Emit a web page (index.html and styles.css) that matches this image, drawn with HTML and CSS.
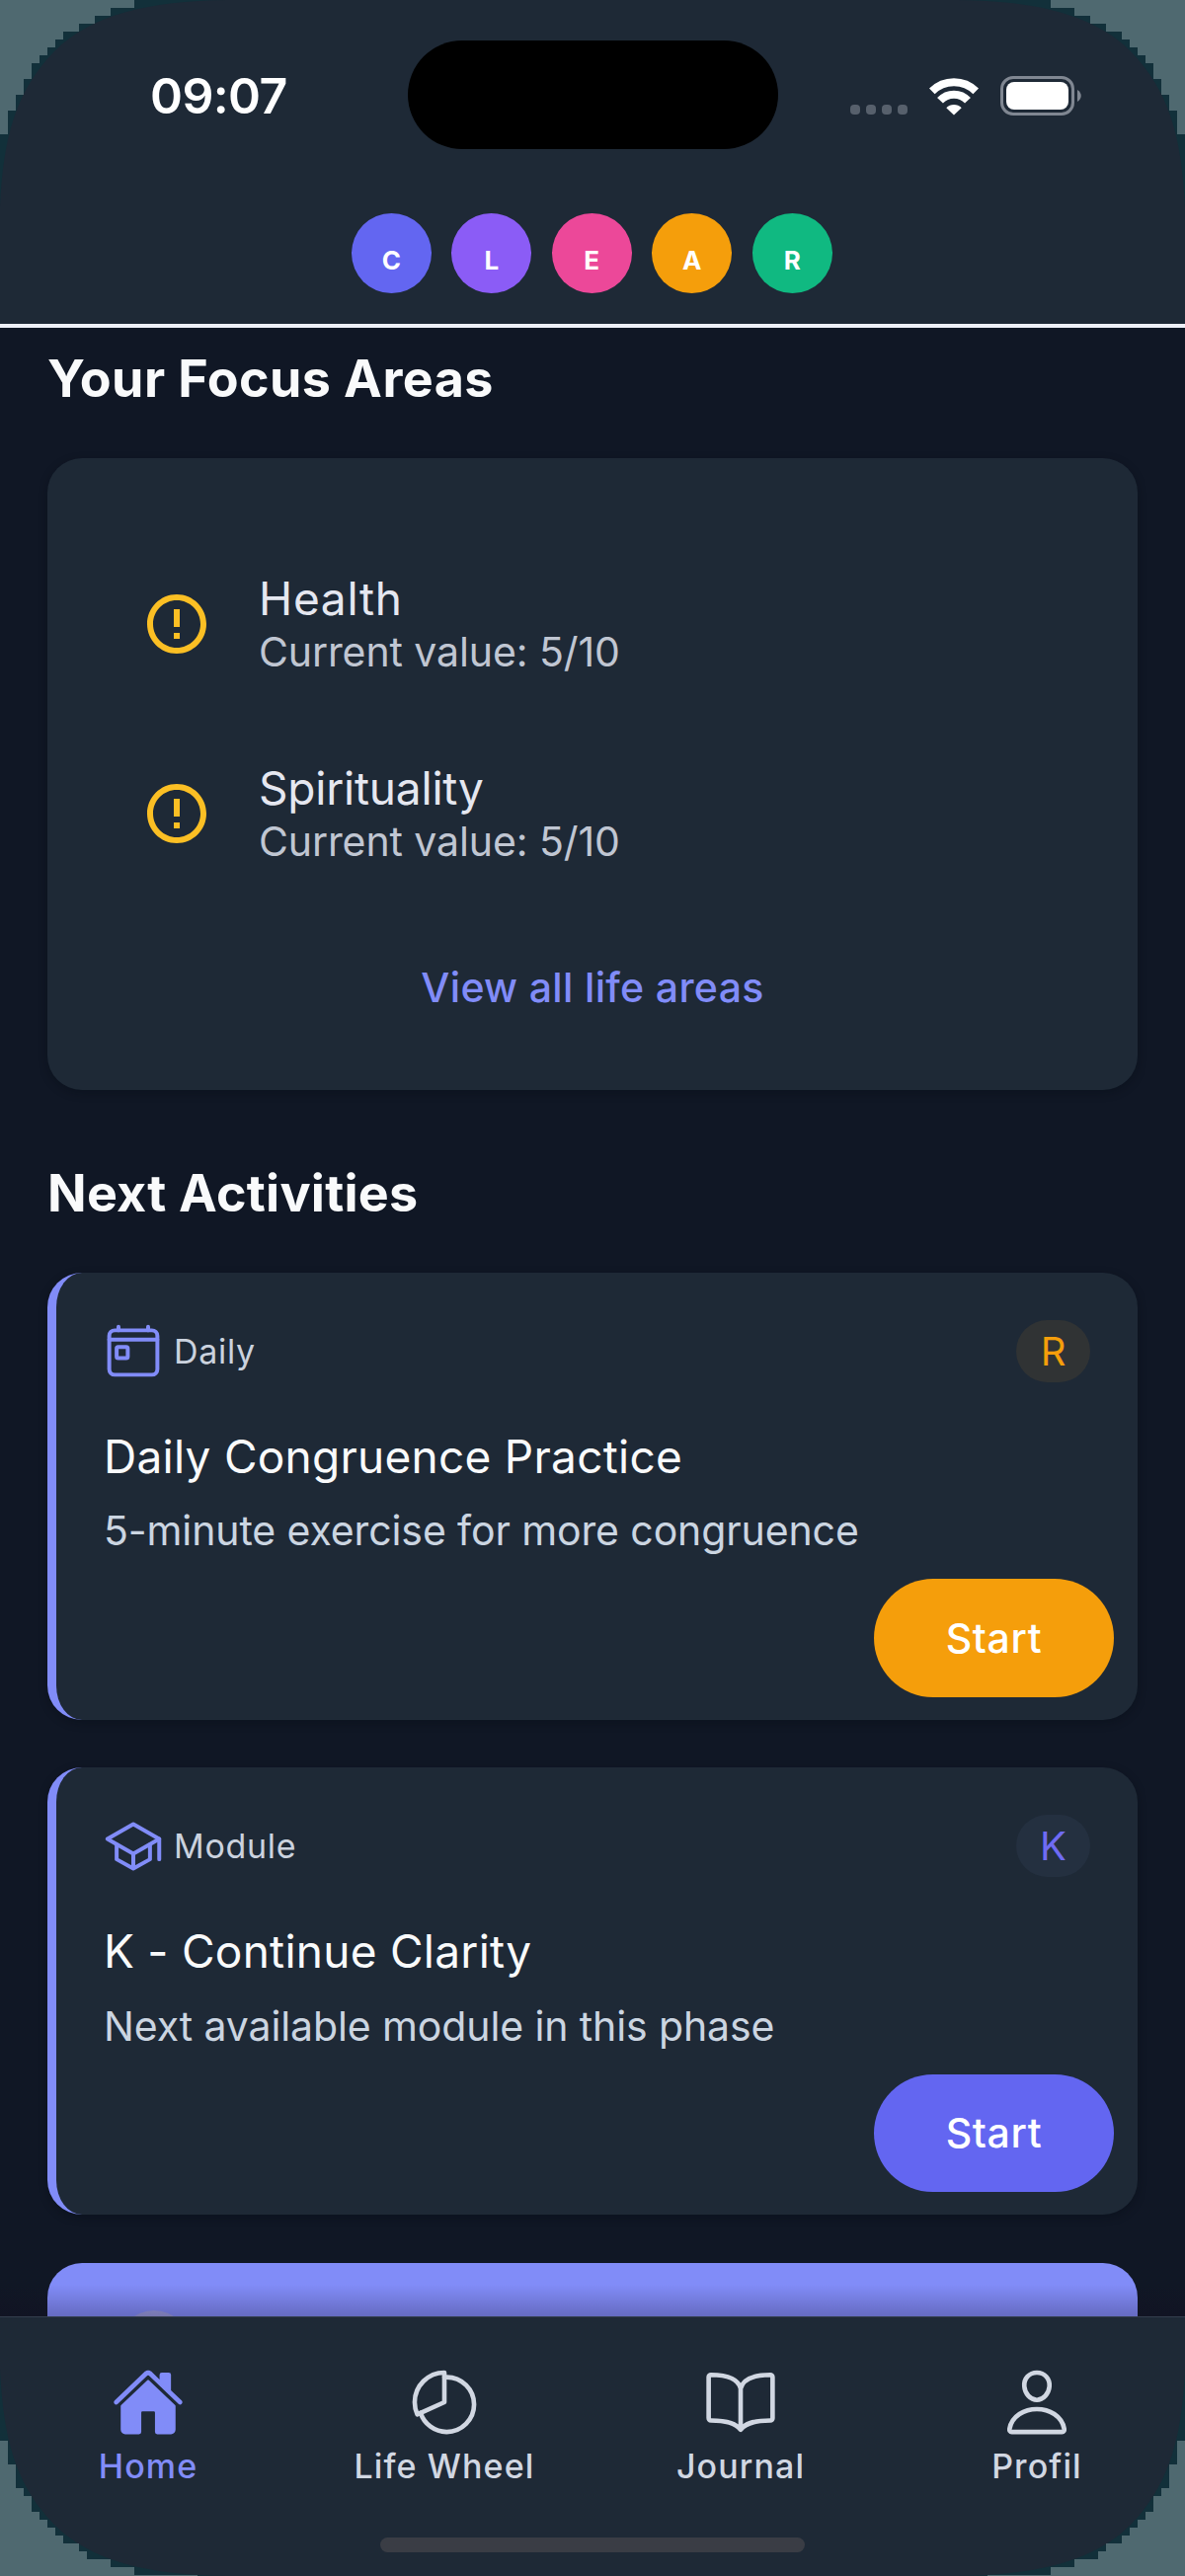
FILE: index.html
```html
<!DOCTYPE html>
<html lang="en">
<head>
<meta charset="utf-8">
<title>Home</title>
<link rel="stylesheet" href="styles.css">
</head>
<body>
<div class="screen">
  <header class="header">
    <div class="status">
      <div class="time">09:07</div>
      <div class="island"></div>
      <div class="indicators">
        <div class="dots"><i></i><i></i><i></i><i></i></div>
        <svg class="wifi" viewBox="0 0 50 39"><path fill="none" stroke="#fff" stroke-width="8" d="M2.800 14.300A31.500 31.500 0 0 1 47.200 14.300M11 23.800A19 19 0 0 1 39 23.800"/><path fill="#fff" d="M25 38.500 17.300 31.200A11 11 0 0 1 32.700 31.200Z"/></svg>
        <div class="battery"><b></b></div>
        <svg class="nub" viewBox="0 0 4 12"><path fill="#808792" d="M0 0C5 3 5 9 0 12Z"/></svg>
      </div>
    </div>
    <div class="phases">
      <span class="phase c">C</span><span class="phase l">L</span><span class="phase e">E</span><span class="phase a">A</span><span class="phase r">R</span>
    </div>
  </header>
  <main class="content">
    <h2 class="heading focus-title">Your Focus Areas</h2>
    <section class="card focus">
      <div class="area">
        <svg class="alert" viewBox="0 0 24 24"><path fill="#fbbf24" d="M11 15h2v2h-2zm0-8h2v6h-2zm.99-5C6.470 2 2 6.480 2 12s4.470 10 9.990 10C17.520 22 22 17.520 22 12S17.520 2 11.990 2zM12 20c-4.420 0-8-3.580-8-8s3.580-8 8-8 8 3.580 8 8-3.580 8-8 8z"/></svg>
        <div class="area-text"><div class="area-name">Health</div><div class="area-value">Current value: 5/10</div></div>
      </div>
      <div class="area">
        <svg class="alert" viewBox="0 0 24 24"><path fill="#fbbf24" d="M11 15h2v2h-2zm0-8h2v6h-2zm.99-5C6.470 2 2 6.480 2 12s4.470 10 9.990 10C17.520 22 22 17.520 22 12S17.520 2 11.990 2zM12 20c-4.420 0-8-3.580-8-8s3.580-8 8-8 8 3.580 8 8-3.580 8-8 8z"/></svg>
        <div class="area-text"><div class="area-name snug">Spirituality</div><div class="area-value">Current value: 5/10</div></div>
      </div>
      <a class="link">View all life areas</a>
    </section>
    <h2 class="heading next-title">Next Activities</h2>
    <section class="card activity">
      <div class="top">
        <svg class="kind" viewBox="0 0 512 512"><g fill="none" stroke="#818cf8" stroke-width="34" stroke-linecap="round" stroke-linejoin="round"><rect x="48" y="80" width="416" height="384" rx="48"/><rect x="112" y="224" width="96" height="96" rx="13"/><path d="M128 48v32M384 48v32M464 160H48"/></g></svg>
        <span class="kind-name">Daily</span>
        <span class="badge amber">R</span>
      </div>
      <div class="title">Daily Congruence Practice</div>
      <div class="desc">5-minute exercise for more congruence</div>
      <button class="start amber-bg">Start</button>
    </section>
    <section class="card activity">
      <div class="top">
        <svg class="kind" viewBox="0 0 512 512"><g fill="none" stroke="#818cf8" stroke-width="34" stroke-linecap="round" stroke-linejoin="round"><path d="M32 192 256 64l224 128-224 128L32 192z"/><path d="M112 240v128l144 80 144-80V240M480 368V192M256 320v128"/></g></svg>
        <span class="kind-name">Module</span>
        <span class="badge indigo">K</span>
      </div>
      <div class="title">K - Continue Clarity</div>
      <div class="desc">Next available module in this phase</div>
      <button class="start indigo-bg">Start</button>
    </section>
    <section class="promo"><i class="promo-icon"></i></section>
    <div class="fade"></div>
  </main>
  <nav class="tabs">
    <div class="tab-row">
      <a class="tab active"><svg viewBox="0 0 512 512"><path fill="#818cf8" d="M261.560 101.280a8 8 0 0 0-11.060 0L66.400 277.150a8 8 0 0 0-2.470 5.790L63.900 448a32 32 0 0 0 32 32H192a16 16 0 0 0 16-16V328a8 8 0 0 1 8-8h80a8 8 0 0 1 8 8v136a16 16 0 0 0 16 16h96.060a32 32 0 0 0 32-32V282.940a8 8 0 0 0-2.470-5.790z"/><path fill="#818cf8" d="m490.910 244.150-74.800-71.560V64a16 16 0 0 0-16-16h-48a16 16 0 0 0-16 16v32l-57.920-55.380C272.770 35.140 264.710 32 256 32c-8.680 0-16.720 3.140-22.140 8.630l-212.700 203.500c-6.220 6-7 15.870-1.340 22.370A16 16 0 0 0 43 267.560L250.500 69.280a8 8 0 0 1 11.060 0l207.520 198.280a16 16 0 0 0 22.590-.44c6.140-6.360 5.630-16.860-.76-22.970z"/></svg><span>Home</span></a>
      <a class="tab"><svg viewBox="0 0 512 512"><g fill="none" stroke="#d1d7e2" stroke-width="32" stroke-linecap="round" stroke-linejoin="round"><path d="M256.050 80.650Q263.940 80 272 80c106 0 192 86 192 192S378 464 272 464A192.090 192.090 0 0 1 89.120 330.650"/><path d="M256 48C141.120 48 48 141.120 48 256a207.300 207.300 0 0 0 18.090 85L256 256z"/></g></svg><span>Life Wheel</span></a>
      <a class="tab"><svg viewBox="0 0 512 512"><path fill="none" stroke="#d1d7e2" stroke-width="32" stroke-linecap="round" stroke-linejoin="round" d="M256 160c16-63.160 76.430-95.410 208-96a15.940 15.940 0 0 1 16 16v288a16 16 0 0 1-16 16c-128 0-177.450 25.810-208 64-30.370-38-80-64-208-64-9.880 0-16-8.050-16-17.930V80a15.940 15.940 0 0 1 16-16c131.570.59 192 32.840 208 96zM256 160v288"/></svg><span>Journal</span></a>
      <a class="tab"><svg viewBox="0 0 512 512"><g fill="none" stroke="#d1d7e2" stroke-width="32" stroke-linecap="round" stroke-linejoin="round"><path d="M344 144c-3.920 52.870-44 96-88 96s-84.150-43.120-88-96c-4-55 35-96 88-96s92 42 88 96z"/><path d="M256 304c-87 0-175.300 48-191.640 138.600C62.390 453.520 68.570 464 80 464h352c11.440 0 17.620-10.480 15.650-21.400C431.300 352 343 304 256 304z"/></g></svg><span>Profil</span></a>
    </div>
    <div class="home-bar"></div>
  </nav>
  <!-- Stepped device corners laid over the screen -->
  <svg class="corners" viewBox="0 0 1200 2609">
    <defs>
      <g id="corner-top">
        <path fill="#12303a" d="M0 0H230C150 1 92 15 55 52C16 92 3 140 0 210Z"/>
        <path fill="#4f6970" d="M0 0H136V8H112V16H96V24H80V32H64V40H56V48H48V56H40V64H32V80H24V96H16V112H8V136H0Z"/>
      </g>
      <g id="corner-bottom">
        <path fill="#12303a" d="M0 2609H230C150 2608 92 2594 55 2557C16 2517 3 2469 0 2399Z"/>
        <path fill="#4f6970" d="M0 2472H8V2496H16V2520H24V2528H32V2544H40V2552H48V2560H56V2568H64V2576H80V2584H88V2592H112V2600H136V2608H200V2609H0Z"/>
      </g>
    </defs>
    <use href="#corner-top"/><use href="#corner-top" transform="matrix(-1 0 0 1 1200 0)"/>
    <use href="#corner-bottom"/><use href="#corner-bottom" transform="matrix(-1 0 0 1 1200 0)"/>
  </svg>
</div>
</body>
</html>
```
FILE: styles.css
```css
*{box-sizing:border-box}
body{margin:0;background:#101725;font-family:Inter,"Liberation Sans",sans-serif}
.screen{position:relative;width:1200px;height:2609px;overflow:hidden;display:flex;flex-direction:column;background:#101725}
.header{height:332px;flex:none;background:#1e2936;border-bottom:4px solid #eef0f8}
.status{display:grid;grid-template-columns:413px 375px 412px;height:216px;align-items:start}
.time{height:195px;line-height:195px;padding-left:152px;font-size:50px;font-weight:600;letter-spacing:-.6px;color:#fff}
.island{height:110px;margin-top:41px;border-radius:55px;background:#000}
.indicators{display:flex;align-items:center;height:194px;padding-left:73px}
.dots{display:flex;gap:6px;padding-top:28px;margin-right:22px}
.dots i{width:10px;height:10px;border-radius:4px;background:#57606c}
.wifi{width:50px;height:39px;margin-right:22px}
.battery{width:75px;height:40px;border:3px solid #808792;border-radius:13px;padding:3px}
.battery b{display:block;height:28px;border-radius:8px;background:#fff}
.nub{width:4px;height:12px;margin-left:3px}
.phases{display:flex;justify-content:center;gap:20.500px;padding-right:1.500px}
.phase{width:81px;height:81px;border-radius:50%;text-align:center;line-height:95px;font-size:26px;font-weight:700;color:#fff}
.c{background:#6366f1}
.l{background:#8b5cf6}
.e{background:#ec4899}
.a{background:#f59e0b}
.r{background:#10b981}
.content{position:relative;flex:1;min-height:0;overflow:hidden;padding:20px 48px 0}
.heading{margin:0 0 47.500px;height:64px;line-height:64px;font-size:52px;font-weight:700;color:#f9fafb}
.focus-title{letter-spacing:.43px}
.next-title{margin-top:73px;letter-spacing:.25px}
.card{background:#1e2936;border-radius:35px;box-shadow:0 3px 10px rgba(0,10,16,.3)}
.focus{height:640.500px;padding:72px 95px 0}
.area{display:flex;align-items:center;height:192px;gap:47px}
.alert{width:72px;height:72px}
.area-text{line-height:54px;padding-top:2px}
.area-name{font-size:46px;letter-spacing:.7px;color:#e5e7f0}
.snug{letter-spacing:-.2px}
.area-value{font-size:41px;letter-spacing:-.1px;color:#c0c6d2}
.link{display:block;margin-top:53px;text-align:center;line-height:54px;font-size:41px;font-weight:500;letter-spacing:.34px;color:#818cf8}
.activity{height:453.300px;margin-bottom:48.400px;border-left:9px solid #818cf8;padding:48px 48px 0;display:flex;flex-direction:column}
.top{display:flex;align-items:center;height:63px}
.kind{width:60px;height:60px;margin-right:11px}
.kind-name{font-size:34px;letter-spacing:.7px;color:#cbd2de}
.badge{margin-left:auto;width:75px;height:63px;border-radius:32px;line-height:63px;text-align:center;font-size:40px}
.amber{color:#f59e0b;background:#303334}
.indigo{color:#6f6bf2;background:#243040}
.title{margin-top:47px;line-height:56px;font-size:46px;letter-spacing:.26px;color:#f9fafb;white-space:nowrap}
.desc{margin-top:20.500px;line-height:54px;font-size:41px;letter-spacing:-.11px;color:#cbd5e1;white-space:nowrap}
.start{align-self:flex-end;margin:22px -24px 0 0;padding:0;width:243px;height:119.500px;border:0;border-radius:60px;font:500 41px Inter,sans-serif;letter-spacing:.6px;color:#fff}
.amber-bg{background:#f59e0b}
.indigo-bg{background:#6366f1}
.promo{height:300px;border-radius:35px;background:#818cf8;padding:48px 72px}
.promo-icon{display:block;width:72px;height:72px;border-radius:50%;background:#989be0}
.fade{position:absolute;left:0;right:0;bottom:0;height:32px;background:linear-gradient(rgba(30,10,40,0),rgba(20,10,30,.25))}
.tabs{height:263px;flex:none;background:#1e2936;border-top:1px solid #333d4c;padding-top:49px}
.tab-row{display:grid;grid-template-columns:repeat(4,1fr);height:174px}
.tab{display:flex;flex-direction:column;align-items:center;line-height:40px;font-size:34px;font-weight:500;letter-spacing:1.100px;color:#d1d7e2;gap:8px}
.tab svg{width:74px;height:74px}
.active{color:#818cf8}
.home-bar{width:430px;height:15px;border-radius:8px;background:#3a3d45;margin:0 auto}
.corners{position:absolute;left:0;top:0;width:1200px;height:2609px;pointer-events:none}
```
